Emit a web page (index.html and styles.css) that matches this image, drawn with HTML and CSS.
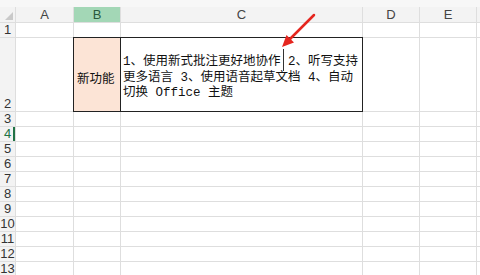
FILE: index.html
```html
<!DOCTYPE html>
<html lang="zh-CN">
<head>
    <meta charset="UTF-8">
    <meta name="viewport" content="width=device-width, initial-scale=1.0">
    <title>新功能 - 工作表</title>
    <link rel="stylesheet" href="styles.css">
</head>
<body>

    <div class="topbar"></div>

    <div class="sheet" id="sheet">
        <div class="corner"></div>
        <div class="col-head">A</div>
        <div class="col-head selected">B</div>
        <div class="col-head">C</div>
        <div class="col-head">D</div>
        <div class="col-head">E</div>
        <div class="col-head"></div>

        <div class="row-head">1</div>
        <div class="cell"></div>
        <div class="cell"></div>
        <div class="cell"></div>
        <div class="cell"></div>
        <div class="cell"></div>
        <div class="cell"></div>

        <div class="row-head">2</div>
        <div class="cell"></div>
        <div class="cell boxed label">新功能</div>
        <div class="cell boxed content">
            <p>1、使用新式批注更好地协作<span class="caret"></span> 2、听写支持更多语言 3、使用语音起草文档 4、自动切换 Office 主题</p>
        </div>
        <div class="cell"></div>
        <div class="cell"></div>
        <div class="cell"></div>
        <!-- rows 3 and below are added by the script -->
    </div>

    <svg class="arrow" width="480" height="60" viewBox="0 0 480 60">
        <line x1="314" y1="15" x2="290" y2="39" stroke="#e5261f" stroke-width="2.5" stroke-linecap="round"/>
        <polygon points="282,47 294,42.5 286.5,35" fill="#e5261f"/>
    </svg>

<script>
    const sheet = document.getElementById('sheet');
    const columnCount = 6;

    for (let row = 3; row <= 13; row++) {
        const head = document.createElement('div');
        head.className = row === 4 ? 'row-head active' : 'row-head';
        head.innerText = row;
        sheet.appendChild(head);

        for (let col = 0; col < columnCount; col++) {
            const cell = document.createElement('div');
            cell.className = 'cell';
            sheet.appendChild(cell);
        }
    }
</script>

</body>
</html>
```

FILE: styles.css
```css
body {
    margin: 0;
    width: 480px;
    height: 275px;
    overflow: hidden;
    position: relative;
    background-color: #fff;
    font-family: "Liberation Sans", Arial, sans-serif;
}

.topbar {
    height: 7px;
    background-color: #f7f7f7;
}

.sheet {
    display: grid;
    grid-template-columns: 15px 57px 46px 241px 56px 56px 1fr;
    grid-template-rows: 15px 14px 73px repeat(11, 14px);
    gap: 1px;
    background-color: #dedede;
}

.corner,
.col-head,
.row-head {
    background-color: #f3f3f3;
    color: #444;
    font-size: 13px;
    line-height: 14px;
}

.corner {
    position: relative;
}

.corner::after {
    content: "";
    position: absolute;
    right: 2px;
    bottom: 2px;
    border-style: solid;
    border-width: 0 0 8px 8px;
    border-color: transparent transparent #c9c9c9 transparent;
}

.col-head {
    text-align: center;
    line-height: 15px;
}

.col-head.selected {
    background-color: #a3d7b6;
    color: #2b5a3e;
}

.row-head {
    display: flex;
    align-items: flex-end;
    justify-content: center;
    color: #333;
}

.row-head.active {
    color: #217346;
    box-shadow: inset -2px 0 0 #217346;
}

.cell {
    background-color: #fff;
}

.cell.boxed {
    box-shadow: 0 0 0 1px #222;
}

.label {
    display: flex;
    align-items: center;
    padding: 5px 0 0 3px;
    background-color: #fce4d6;
    font-family: "Noto Sans CJK SC", sans-serif;
    font-size: 12.5px;
    color: #111;
}

.content {
    display: flex;
    align-items: center;
    padding: 8px 0 0 2px;
}

.content p {
    margin: 0;
    font-family: "Liberation Mono", "Noto Sans CJK SC", monospace;
    font-size: 12.5px;
    line-height: 15.5px;
    color: #111;
}

.caret {
    position: relative;
}

.caret::after {
    content: "";
    position: absolute;
    left: 2px;
    top: -6px;
    height: 22px;
    border-left: 1px solid #333;
}

.arrow {
    position: absolute;
    left: 0;
    top: 0;
    pointer-events: none;
}
```
